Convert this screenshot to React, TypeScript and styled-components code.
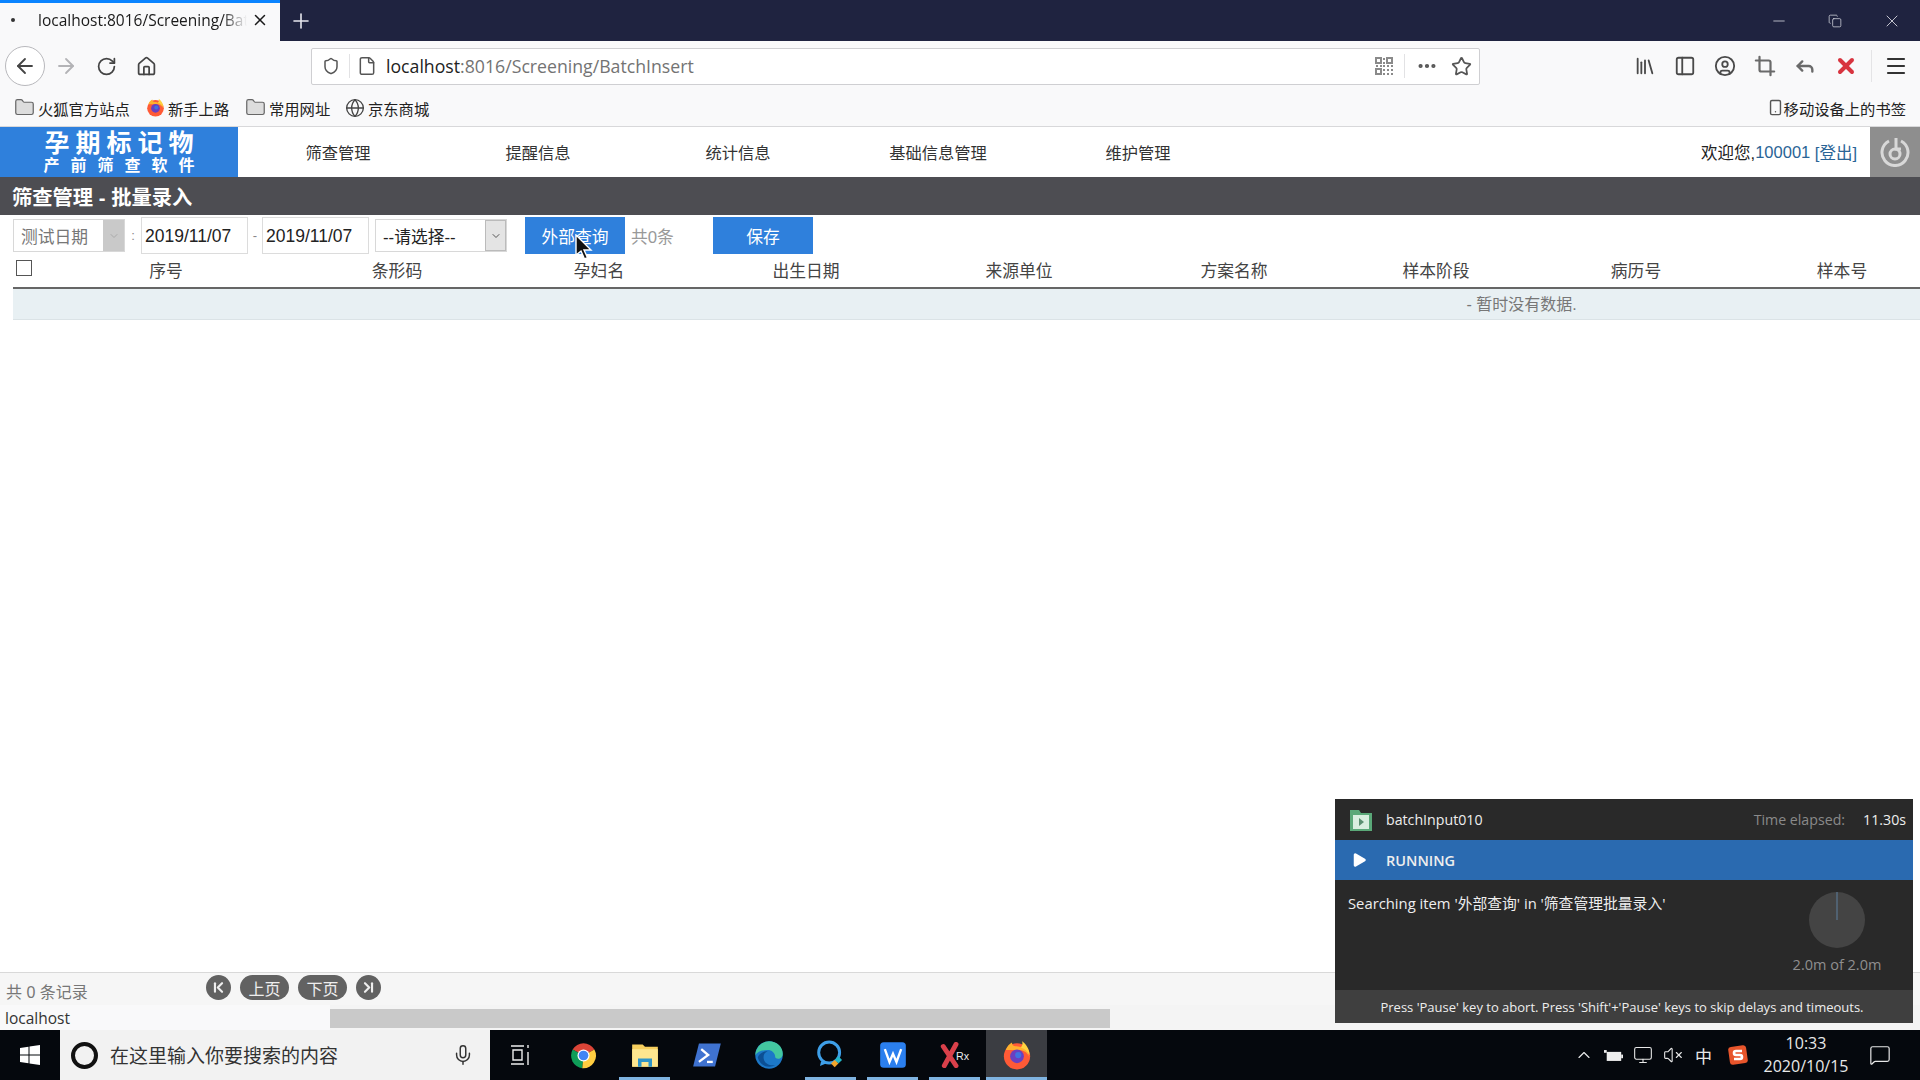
import React from 'react';
import styled, { createGlobalStyle } from 'styled-components';
import {
  ArrowLeft, ArrowRight, RotateCw, Home, Shield, File, MoreHorizontal, Star, Minus, X, Plus, Copy,
  PanelLeft, CircleUser, Crop, Reply, Menu, Folder, Globe, Smartphone, Mic, ChevronUp, ChevronDown,
  Play, ChevronFirst, ChevronLast, Monitor, VolumeX, MessageSquare, Library,
} from 'lucide-react';

const GlobalStyle = createGlobalStyle`
  html, body { margin: 0; padding: 0; height: 100%; overflow: hidden; background: #fff; }
  * { box-sizing: border-box; }
  body { font-family: "Liberation Sans", "Noto Sans CJK SC", sans-serif; }
`;

const UI_FONT = '"Open Sans", "Noto Sans CJK SC", sans-serif';

const Screen = styled.div`
  position: relative;
  width: 1920px;
  height: 1080px;
  display: flex;
  flex-direction: column;
  overflow: hidden;
`;

/* browser chrome */
const TabStrip = styled.div`
  height: 41px;
  flex: none;
  background: #1f2340;
  display: flex;
  align-items: center;
  color: #fff;
  font-family: ${UI_FONT};
`;

const ActiveTab = styled.div`
  width: 280px;
  height: 41px;
  background: #f9f9fa;
  border-top: 3px solid #0a84ff;
  display: flex;
  align-items: center;
  color: #1a1a1a;
  font-size: 15.5px;
  padding: 0 0 4px 11px;
`;

const TabDot = styled.span`
  width: 4px;
  height: 4px;
  border-radius: 50%;
  background: #333;
  margin-right: 23px;
  flex: none;
`;

const TabTitle = styled.span`
  width: 209px;
  margin-right: 4px;
  overflow: hidden;
  white-space: nowrap;
  mask-image: linear-gradient(to right, #000 88%, transparent);
`;

const NewTab = styled.div`
  margin-left: 9px;
  display: flex;
  color: #e8e8ee;
`;

const WindowButtons = styled.div`
  margin-left: auto;
  display: flex;
  align-items: center;
  gap: 40px;
  padding-right: 18px;
  color: #e4e5ec;
`;

const NavBar = styled.div`
  height: 50px;
  flex: none;
  background: #f9f9fa;
  display: flex;
  align-items: center;
  color: #444;
`;

const NavButtons = styled.div`
  width: 311px;
  display: flex;
  align-items: center;
  padding-left: 5px;
`;

const BackButton = styled.div`
  width: 40px;
  height: 40px;
  margin-right: 1px;
  border-radius: 50%;
  border: 1px solid #b8b8bc;
  background: #fff;
  display: flex;
  align-items: center;
  justify-content: center;
`;

const NavIcon = styled.div<{ $muted?: boolean }>`
  width: 40px;
  display: flex;
  justify-content: center;
  color: ${({ $muted }) => ($muted ? '#b3b3b6' : '#444')};
`;

const UrlBar = styled.div`
  width: 1169px;
  height: 37px;
  background: #fff;
  border: 1px solid #cfcfd2;
  border-radius: 2px;
  display: flex;
  align-items: center;
  padding-left: 10px;
  font-family: ${UI_FONT};
  font-size: 17.7px;
  color: #222;
`;

const UrlSeparator = styled.span`
  width: 1px;
  height: 24px;
  background: #e2e2e4;
  margin: 0 7px 0 9px;
`;

const UrlHost = styled.span`
  margin-left: 9px;
`;

const UrlRest = styled.span`
  color: #737373;
  flex: 1;
`;

const UrlActions = styled.div`
  display: flex;
  align-items: center;
  gap: 13px;
  padding-right: 7px;
  color: #555;
`;

const ActionDivider = styled.span`
  width: 1px;
  height: 24px;
  background: #e2e2e4;
  margin: 0 -2px;
`;

const ToolIcons = styled.div`
  margin-left: 154px;
  display: flex;
  align-items: center;
  gap: 18px;
  color: #4a4a4a;
`;

const MenuButton = styled.div`
  margin-left: 13px;
  padding-left: 12px;
  border-left: 1px solid #e4e4e6;
  height: 32px;
  display: flex;
  align-items: center;
  color: #333;
`;

const Bookmarks = styled.div`
  height: 36px;
  flex: none;
  background: #f9f9fa;
  border-bottom: 1px solid #d8d8da;
  display: flex;
  align-items: center;
  padding: 0 14px 2px 14px;
  font-family: ${UI_FONT};
  font-size: 15.3px;
  color: #222;
`;

const Bookmark = styled.div<{ $width?: number }>`
  display: flex;
  align-items: center;
  gap: 3px;
  width: ${({ $width }) => ($width ? `${$width}px` : 'auto')};
  flex: none;
  white-space: nowrap;
`;

const MobileBookmark = styled(Bookmark)`
  margin-left: auto;
  gap: 0;
`;

/* page */
const PageHeader = styled.header`
  height: 50px;
  flex: none;
  display: flex;
  background: #fff;
`;

const Logo = styled.div`
  width: 238px;
  background: #2f80dc;
  color: #fff;
  display: flex;
  flex-direction: column;
  align-items: center;
  justify-content: center;
  font-weight: 700;
  line-height: 1;
`;

const LogoTitle = styled.div`
  font-size: 25px;
  letter-spacing: 6px;
  line-height: 27px;
  margin-right: -6px;
`;

const LogoSub = styled.div`
  font-size: 16px;
  letter-spacing: 11px;
  line-height: 18px;
  margin-right: -11px;
`;

const MainNav = styled.nav`
  display: flex;
`;

const NavItem = styled.a`
  width: 200px;
  display: flex;
  align-items: center;
  justify-content: center;
  font-size: 16.3px;
  color: #333;
`;

const UserBox = styled.div`
  margin-left: auto;
  display: flex;
  align-items: center;
  font-size: 16.5px;
  color: #222;
  padding-right: 13px;
`;

const UserLink = styled.a`
  color: #2a6496;
`;

const PowerButton = styled.div`
  width: 50px;
  background: #8e8e8e;
  color: #d8d8d8;
  display: flex;
  align-items: center;
  justify-content: center;
  padding-bottom: 3px;
`;

const TitleBar = styled.div`
  height: 38px;
  flex: none;
  background: #4d4d52;
  color: #fff;
  font-size: 20.3px;
  font-weight: 700;
  padding-left: 12px;
  display: flex;
  align-items: center;
`;

const Content = styled.main`
  flex: 1;
  background: #fff;
  padding-left: 13px;
  overflow: hidden;
`;

const FilterRow = styled.div`
  height: 40px;
  padding-top: 1px;
  display: flex;
  align-items: center;
  font-size: 16.8px;
  color: #222;
`;

const SelectBox = styled.div<{ $width: number; $faded?: boolean }>`
  width: ${({ $width }) => $width}px;
  height: 33px;
  border: 1px solid #d8d8d8;
  background: #fff;
  display: flex;
  align-items: center;
  justify-content: space-between;
  padding-left: 7px;
  color: ${({ $faded }) => ($faded ? '#777' : '#222')};
  flex: none;
`;

const SelectArrow = styled.span<{ $faded?: boolean }>`
  width: 21px;
  height: 100%;
  background: ${({ $faded }) => ($faded ? '#c9c9c9' : '#e4e4e4')};
  border: 1px solid ${({ $faded }) => ($faded ? '#c9c9c9' : '#bbb')};
  color: ${({ $faded }) => ($faded ? '#aaa' : '#555')};
  display: flex;
  align-items: center;
  justify-content: center;
`;

const Sep = styled.span<{ $width: number }>`
  width: ${({ $width }) => $width}px;
  flex: none;
  text-align: center;
  color: #888;
  font-size: 13px;
`;

const DateInput = styled.div`
  width: 107px;
  height: 37px;
  border: 1px solid #dcdcdc;
  display: flex;
  align-items: center;
  padding: 2px 0 0 3px;
  font-size: 17.5px;
  flex: none;
`;

const ActionButton = styled.button`
  position: relative;
  width: 100px;
  height: 37px;
  border: 0;
  background: #2f80dc;
  color: #fff;
  font: inherit;
  padding: 0;
  flex: none;
`;

const Cursor = styled.svg`
  position: absolute;
  left: 50px;
  top: 17px;
`;

const Count = styled.span`
  width: 88px;
  padding-left: 6px;
  color: #999;
  flex: none;
`;

const COLUMNS = '39px 228px 234px 170px 244px 182px 248px 156px 244px 168px';

const TableHead = styled.div`
  height: 34px;
  width: 1907px;
  padding-bottom: 3px;
  display: grid;
  grid-template-columns: ${COLUMNS};
  align-items: center;
  font-size: 16.8px;
  color: #444;
  border-bottom: 2px solid #666;
`;

const HeadCell = styled.div`
  text-align: center;
`;

const CheckBox = styled.span`
  width: 16px;
  height: 16px;
  border: 1px solid #555;
  background: #fff;
  margin: -4px 0 0 3px;
`;

const EmptyRow = styled.div`
  height: 31px;
  width: 1907px;
  background: #e8f0f3;
  border-bottom: 1px solid #dbe3e6;
  font-size: 16px;
  color: #777;
  display: flex;
  align-items: center;
  justify-content: center;
  padding: 0 0 2px 1110px;
`;

const Pager = styled.div`
  height: 33px;
  flex: none;
  background: #f6f6f6;
  border-top: 1px solid #d9d9d9;
  display: flex;
  align-items: center;
  padding-left: 6px;
  font-size: 16px;
  color: #777;
`;

const PagerTotal = styled.span`
  width: 200px;
  padding-top: 4px;
`;

const PagerButtons = styled.div`
  display: flex;
  align-items: center;
  gap: 9px;
  margin-top: -3px;
`;

const RoundButton = styled.span`
  width: 25px;
  height: 25px;
  border-radius: 50%;
  background: #626262;
  color: #eee;
  display: flex;
  align-items: center;
  justify-content: center;
`;

const PageButton = styled.span`
  width: 49px;
  height: 25px;
  border-radius: 13px;
  background: #626262;
  color: #eee;
  display: flex;
  align-items: center;
  justify-content: center;
  font-size: 16px;
`;

const StatusBar = styled.div`
  height: 25px;
  flex: none;
  display: flex;
  background: #f4f4f4;
`;

const StatusLabel = styled.div`
  width: 330px;
  background: #f9f9fa;
  font-family: ${UI_FONT};
  font-size: 15.5px;
  color: #333;
  padding-left: 5px;
  display: flex;
  align-items: center;
`;

const ScrollThumb = styled.div`
  width: 780px;
  height: 19px;
  margin-top: 4px;
  background: #c9c9c9;
`;

/* taskbar */
const TaskBar = styled.footer`
  height: 50px;
  flex: none;
  background: #05080d;
  display: flex;
  align-items: stretch;
  color: #eee;
`;

const StartButton = styled.div`
  width: 60px;
  display: flex;
  align-items: center;
  justify-content: center;
`;

const SearchBox = styled.div`
  width: 430px;
  background: #f2f2f2;
  color: #333;
  display: flex;
  align-items: center;
  padding-left: 11px;
  font-size: 19px;
  font-family: ${UI_FONT};
`;

const CortanaRing = styled.span`
  width: 27px;
  height: 27px;
  border-radius: 50%;
  border: 4px solid #111;
  margin-right: 12px;
  flex: none;
`;

const SearchText = styled.span`
  flex: 1;
`;

const MicIcon = styled.span`
  display: flex;
  margin-right: 16px;
  color: #333;
`;

const TaskSlot = styled.div<{ $open?: boolean; $active?: boolean }>`
  position: relative;
  width: ${({ $active }) => ($active ? '61px' : '62px')};
  display: flex;
  align-items: center;
  justify-content: center;
  background: ${({ $active }) => ($active ? '#3b3d42' : 'transparent')};

  &::after {
    content: '';
    display: ${({ $open }) => ($open ? 'block' : 'none')};
    position: absolute;
    left: ${({ $active }) => ($active ? 0 : '5px')};
    right: ${({ $active }) => ($active ? 0 : '6px')};
    bottom: 0;
    height: 3px;
    background: #7fb3e0;
  }
`;

const Tray = styled.div`
  margin-left: auto;
  display: flex;
  align-items: center;
  gap: 10px;
  padding-right: 29px;
  color: #e8e8e8;
`;

const ImeLabel = styled.span`
  font-size: 17px;
  margin: 0 6px 0 2px;
  font-family: "Noto Sans CJK SC", sans-serif;
`;

const Clock = styled.div`
  width: 92px;
  margin: 0 7px 0 2px;
  text-align: center;
  font-size: 16px;
  line-height: 23px;
  font-family: ${UI_FONT};
`;

/* automation panel */
const RunPanel = styled.aside`
  position: absolute;
  left: 1335px;
  top: 799px;
  width: 578px;
  height: 224px;
  background: #292929;
  color: #eee;
  display: flex;
  flex-direction: column;
  font-family: ${UI_FONT};
  font-size: 14.8px;
`;

const PanelHead = styled.div`
  height: 41px;
  flex: none;
  display: flex;
  align-items: center;
  padding: 0 7px 0 14px;
  font-size: 14.2px;
`;

const PanelName = styled.span`
  margin-left: 13px;
  flex: 1;
`;

const Elapsed = styled.span`
  color: #8a8a8a;
  margin-right: 18px;
`;

const RunningBar = styled.div`
  height: 40px;
  flex: none;
  background: #2a6ab0;
  display: flex;
  align-items: center;
  padding-left: 15px;
  font-weight: 600;
  font-size: 14.5px;
`;

const RunningLabel = styled.span`
  margin-left: 18px;
`;

const PanelBody = styled.div`
  flex: 1;
  display: flex;
  justify-content: space-between;
  padding: 12px 31px 0 13px;
`;

const GaugeColumn = styled.div`
  width: 90px;
  display: flex;
  flex-direction: column;
  align-items: center;
  color: #8f8f8f;
  gap: 7px;
  white-space: nowrap;
  font-size: 14.5px;
`;

const PanelFoot = styled.div`
  height: 33px;
  flex: none;
  background: #3f3f3f;
  display: flex;
  align-items: center;
  justify-content: center;
  font-size: 13px;
  padding-right: 4px;
`;

/* small drawings */
const QrMark = () => (
  <svg width="18" height="18" viewBox="0 0 18 18" fill="#8a8a8a">
    <path d="M0 0h7v7H0zM2 2v3h3V2zM11 0h7v7h-7zM13 2v3h3V2zM0 11h7v7H0zM2 13v3h3v-3z" fillRule="evenodd" />
    <path d="M8 1h2v2H8zM8 5h2v2H8zM1 8h2v2H1zM5 8h2v2H5zM8 8h2v2H8zM12 8h2v2h-2zM16 8h2v2h-2zM8 12h2v2H8zM12 12h2v2h-2zM16 12h2v2h-2zM8 16h2v2H8zM12 16h2v2h-2zM16 16h2v2h-2z" />
  </svg>
);

const FirefoxIcon = ({ size }: { size: number }) => (
  <svg width={size} height={size} viewBox="0 0 24 24">
    <circle cx="12" cy="13" r="10.5" fill="#ff5a36" />
    <path d="M3 8c1-3 3-5 5-6 0 2 1 3 3 3 5 0 10 3 11 9-1-3-4-6-8-6-4 0-8 0-11 0z" fill="#ffb02e" />
    <path d="M16 1c3 2 6 6 6 11-2-3-4-5-7-6 1-1 2-3 1-5z" fill="#ffd23f" />
    <circle cx="12" cy="13" r="5.5" fill="#6a3fc0" />
    <circle cx="13" cy="12" r="2.5" fill="#3f72e0" />
  </svg>
);

const ChromeIcon = () => (
  <svg width="29" height="29" viewBox="0 0 24 24">
    <path d="M12 12 3 7a10.5 10.5 0 0 1 18 0z" fill="#db4437" />
    <path d="M12 12 3 7a10.5 10.5 0 0 0 8 15.5z" fill="#0f9d58" />
    <path d="M12 12l9-5a10.5 10.5 0 0 1-10 15.5z" fill="#ffcd40" />
    <circle cx="12" cy="12" r="5" fill="#fff" />
    <circle cx="12" cy="12" r="4" fill="#4285f4" />
  </svg>
);

const ExplorerIcon = () => (
  <svg width="28" height="28" viewBox="0 0 24 24">
    <path d="M1 3h9l2 2h11v17H1z" fill="#f7cf5e" />
    <path d="M1 7h22v15H1z" fill="#fde68f" />
    <path d="M6 22v-7h12v7h-3v-4H9v4z" fill="#2f95c8" />
  </svg>
);

const PowerShellIcon = () => (
  <svg width="30" height="28" viewBox="0 0 26 24">
    <path d="M6 2h19l-5 20H1z" fill="#3f72d0" />
    <path d="M8 7l6 5-8 6" fill="none" stroke="#fff" strokeWidth="2" />
    <path d="M13 18h5" stroke="#fff" strokeWidth="2" />
  </svg>
);

const EdgeIcon = () => (
  <svg width="30" height="30" viewBox="0 0 24 24">
    <circle cx="12" cy="12" r="11" fill="#1c78c8" />
    <path d="M1 12C2 4 8 1 12 1c6 0 11 4 11 10 0 4-4 5-6 3 0-4-3-6-6-6-4 0-8 1-10 4z" fill="#43c7a0" />
    <path d="M11 9c-3 1-4 4-3 7 1 3 5 5 9 4-5 3-12 1-14-6 1-3 4-5 8-5z" fill="#0c4f94" />
  </svg>
);

const ChatSearchIcon = () => (
  <svg width="30" height="32" viewBox="0 0 24 26">
    <circle cx="10.5" cy="11" r="8.5" fill="none" stroke="#3e9fe8" strokeWidth="2.4" />
    <path d="M4 18l-1 4 5-2" fill="#3e9fe8" />
    <path d="M18 14l3 3-3 3-3-3z" fill="#22b8c8" />
    <path d="M15 17l3 3-3 3-3-3z" fill="#f2a52b" />
  </svg>
);

const WpsIcon = () => (
  <svg width="28" height="28" viewBox="0 0 24 24">
    <rect x="1" y="1" width="22" height="22" rx="3" fill="#2b7fee" />
    <path d="M5 7l4 11 3-7 3 7 4-11" fill="none" stroke="#fff" strokeWidth="2" />
  </svg>
);

const RxIcon = () => (
  <svg width="30" height="26" viewBox="0 0 28 24">
    <path d="M4 22 15 2M3 4l12 18" stroke="#d9404a" strokeWidth="4.5" strokeLinecap="round" />
    <text x="15" y="17" fontSize="10" fill="#eee" fontFamily="Liberation Sans">Rx</text>
  </svg>
);

const SogouIcon = () => (
  <svg width="20" height="20" viewBox="0 0 20 20">
    <rect x="1" y="1" width="18" height="18" rx="3" fill="#e8552b" transform="rotate(-8 10 10)" />
    <path d="M14 6H8q-2 0-2 2t2 2h4q2 0 2 2t-2 2H6" fill="none" stroke="#fff" strokeWidth="2.6" />
  </svg>
);

const BatteryIcon = () => (
  <svg width="19" height="15" viewBox="0 0 21 16">
    <path d="M0 2h3v3H0z" fill="#eee" />
    <rect x="3" y="4" width="16" height="10" fill="#eee" />
    <rect x="19" y="7" width="2" height="4" fill="#eee" />
  </svg>
);

const PowerIcon = () => (
  <svg width="32" height="32" viewBox="0 0 32 32" fill="none" stroke="currentColor">
    <path d="M10 6a13 13 0 1 0 12 0" strokeWidth="3" />
    <circle cx="16" cy="19" r="5" strokeWidth="3" />
    <path d="M17 3v11h5" strokeWidth="3" />
  </svg>
);

const WindowsIcon = () => (
  <svg width="20" height="20" viewBox="0 0 20 20" fill="#fff">
    <path d="M0 3l8.5-1.2v7.7H0zM9.5 1.6 20 0v9.5H9.5zM0 10.5h8.5v7.7L0 17zM9.5 10.5H20V20L9.5 18.4z" />
  </svg>
);

const TaskViewIcon = () => (
  <svg width="22" height="22" viewBox="0 0 22 22" fill="none" stroke="#eee" strokeWidth="1.4">
    <path d="M1 2h13M1 20h13M3 6h9v10H3zM18 1v3M18 8v13" />
  </svg>
);

const PanelFileIcon = () => (
  <svg width="24" height="24" viewBox="0 0 24 24">
    <path d="M1 2h9l2 3h11v18H1z" fill="#5aa878" />
    <rect x="4" y="7" width="16" height="14" fill="#d8eedf" />
    <path d="M10 10l5 4-5 4z" fill="#5a8f70" />
  </svg>
);

const COLUMN_TITLES = ['序号', '条形码', '孕妇名', '出生日期', '来源单位', '方案名称', '样本阶段', '病历号', '样本号'];
const NAV_TITLES = ['筛查管理', '提醒信息', '统计信息', '基础信息管理', '维护管理'];

const App: React.FC = () => {
  return (
    <Screen>
      <GlobalStyle />
      <TabStrip>
        <ActiveTab>
          <TabDot />
          <TabTitle>localhost:8016/Screening/BatchInsert</TabTitle>
          <X size={18} strokeWidth={2} />
        </ActiveTab>
        <NewTab><Plus size={24} strokeWidth={1.6} /></NewTab>
        <WindowButtons>
          <Minus size={18} strokeWidth={1} />
          <Copy size={14} strokeWidth={1.2} />
          <X size={20} strokeWidth={1} />
        </WindowButtons>
      </TabStrip>

      <NavBar>
        <NavButtons>
          <BackButton><ArrowLeft size={24} strokeWidth={1.8} /></BackButton>
          <NavIcon $muted><ArrowRight size={24} strokeWidth={1.8} /></NavIcon>
          <NavIcon><RotateCw size={21} strokeWidth={2} /></NavIcon>
          <NavIcon><Home size={21} strokeWidth={2} /></NavIcon>
        </NavButtons>
        <UrlBar>
          <Shield size={18} strokeWidth={2} color="#555" />
          <UrlSeparator />
          <File size={20} strokeWidth={1.8} color="#555" />
          <UrlHost>localhost</UrlHost>
          <UrlRest>:8016/Screening/BatchInsert</UrlRest>
          <UrlActions>
            <QrMark />
            <ActionDivider />
            <MoreHorizontal size={22} strokeWidth={2.6} />
            <Star size={21} strokeWidth={2} />
          </UrlActions>
        </UrlBar>
        <ToolIcons>
          <Library size={22} strokeWidth={2} />
          <PanelLeft size={22} strokeWidth={2} />
          <CircleUser size={22} strokeWidth={2} />
          <Crop size={22} strokeWidth={2.4} color="#6a6a6a" />
          <Reply size={22} strokeWidth={2.6} color="#6a6a6a" />
          <X size={24} strokeWidth={4} color="#d8343f" />
        </ToolIcons>
        <MenuButton><Menu size={24} strokeWidth={2.2} /></MenuButton>
      </NavBar>

      <Bookmarks>
        <Bookmark $width={132}><Folder size={21} strokeWidth={1.4} color="#666" fill="#ddd" />火狐官方站点</Bookmark>
        <Bookmark $width={99}><FirefoxIcon size={19} />新手上路</Bookmark>
        <Bookmark $width={100}><Folder size={21} strokeWidth={1.4} color="#666" fill="#ddd" />常用网址</Bookmark>
        <Bookmark><Globe size={20} strokeWidth={1.6} color="#444" />京东商城</Bookmark>
        <MobileBookmark><Smartphone size={17} strokeWidth={2} color="#555" />移动设备上的书签</MobileBookmark>
      </Bookmarks>

      <PageHeader>
        <Logo>
          <LogoTitle>孕期标记物</LogoTitle>
          <LogoSub>产前筛查软件</LogoSub>
        </Logo>
        <MainNav>
          {NAV_TITLES.map((title) => <NavItem key={title}>{title}</NavItem>)}
        </MainNav>
        <UserBox>欢迎您,<UserLink>100001</UserLink>&nbsp;<UserLink>[登出]</UserLink></UserBox>
        <PowerButton><PowerIcon /></PowerButton>
      </PageHeader>

      <TitleBar>筛查管理 - 批量录入</TitleBar>

      <Content>
        <FilterRow>
          <SelectBox $width={112} $faded>
            测试日期
            <SelectArrow $faded><ChevronDown size={12} /></SelectArrow>
          </SelectBox>
          <Sep $width={16}>:</Sep>
          <DateInput>2019/11/07</DateInput>
          <Sep $width={14}>-</Sep>
          <DateInput>2019/11/07</DateInput>
          <Sep $width={6} />
          <SelectBox $width={132}>
            --请选择--
            <SelectArrow><ChevronDown size={12} /></SelectArrow>
          </SelectBox>
          <Sep $width={18} />
          <ActionButton>
            外部查询
            <Cursor width="18" height="26" viewBox="0 0 18 26">
              <path d="M1 1v20l5-4 3.5 8 3-1.4L9 16h7z" fill="#111" stroke="#fff" strokeWidth="1.4" />
            </Cursor>
          </ActionButton>
          <Count>共0条</Count>
          <ActionButton>保存</ActionButton>
        </FilterRow>
        <TableHead>
          <CheckBox />
          {COLUMN_TITLES.map((title) => <HeadCell key={title}>{title}</HeadCell>)}
        </TableHead>
        <EmptyRow>- 暂时没有数据.</EmptyRow>
      </Content>

      <Pager>
        <PagerTotal>共 0 条记录</PagerTotal>
        <PagerButtons>
          <RoundButton><ChevronFirst size={17} strokeWidth={3} /></RoundButton>
          <PageButton>上页</PageButton>
          <PageButton>下页</PageButton>
          <RoundButton><ChevronLast size={17} strokeWidth={3} /></RoundButton>
        </PagerButtons>
      </Pager>

      <StatusBar>
        <StatusLabel>localhost</StatusLabel>
        <ScrollThumb />
      </StatusBar>

      <TaskBar>
        <StartButton><WindowsIcon /></StartButton>
        <SearchBox>
          <CortanaRing />
          <SearchText>在这里输入你要搜索的内容</SearchText>
          <MicIcon><Mic size={22} strokeWidth={1.6} /></MicIcon>
        </SearchBox>
        <TaskSlot><TaskViewIcon /></TaskSlot>
        <TaskSlot><ChromeIcon /></TaskSlot>
        <TaskSlot $open><ExplorerIcon /></TaskSlot>
        <TaskSlot><PowerShellIcon /></TaskSlot>
        <TaskSlot><EdgeIcon /></TaskSlot>
        <TaskSlot $open><ChatSearchIcon /></TaskSlot>
        <TaskSlot $open><WpsIcon /></TaskSlot>
        <TaskSlot $open><RxIcon /></TaskSlot>
        <TaskSlot $open $active><FirefoxIcon size={30} /></TaskSlot>
        <Tray>
          <ChevronUp size={20} strokeWidth={1.4} />
          <BatteryIcon />
          <Monitor size={20} strokeWidth={1.3} />
          <VolumeX size={20} strokeWidth={1.3} />
          <ImeLabel>中</ImeLabel>
          <SogouIcon />
          <Clock>10:33<br />2020/10/15</Clock>
          <MessageSquare size={22} strokeWidth={1.3} />
        </Tray>
      </TaskBar>

      <RunPanel>
        <PanelHead>
          <PanelFileIcon />
          <PanelName>batchInput010</PanelName>
          <Elapsed>Time elapsed:</Elapsed>
          <span>11.30s</span>
        </PanelHead>
        <RunningBar>
          <Play size={18} fill="#fff" strokeWidth={0} />
          <RunningLabel>RUNNING</RunningLabel>
        </RunningBar>
        <PanelBody>
          <span>Searching item '外部查询' in '筛查管理批量录入'</span>
          <GaugeColumn>
            <svg width="56" height="56" viewBox="0 0 56 56">
              <circle cx="28" cy="28" r="28" fill="#444" />
              <path d="M28 0v28" stroke="#5d7f9e" strokeWidth="1" />
            </svg>
            <span>2.0m of 2.0m</span>
          </GaugeColumn>
        </PanelBody>
        <PanelFoot>Press 'Pause' key to abort. Press 'Shift'+'Pause' keys to skip delays and timeouts.</PanelFoot>
      </RunPanel>
    </Screen>
  );
};

export default App;
